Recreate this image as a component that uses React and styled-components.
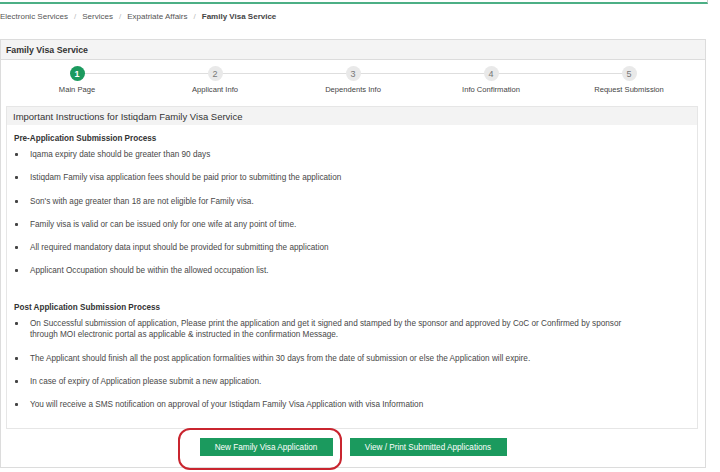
import React from "react";
import styled, { createGlobalStyle } from "styled-components";

const Global = createGlobalStyle`
  html, body { margin: 0; padding: 0; background: #fff; }
  body { font-family: "Liberation Sans", Arial, sans-serif; color: #333; }
  * { box-sizing: border-box; }
`;

const Page = styled.div`
  width: 720px;
  height: 472px;
  position: relative;
  overflow: hidden;
  background: #fff;
`;

const TopBar = styled.div`
  width: 708px;
  height: 4px;
  border-bottom: 2px solid #4caf85;
  border-right: 1px solid #ccc;
`;

const Crumbs = styled.div`
  display: flex;
  align-items: center;
  height: 24px;
  font-size: 8px;
  color: #555;
  gap: 6px;
`;

const Sep = styled.span`
  color: #bbb;
`;

const Current = styled.span`
  font-weight: bold;
  color: #444;
`;

const Panel = styled.div`
  margin-top: 11px;
  width: 706px;
  height: 429px;
  border: 1px solid #dcdcdc;
  background: #fff;
  display: flex;
  flex-direction: column;
`;

const PanelHead = styled.div`
  height: 20px;
  background: #f4f4f4;
  border-bottom: 1px solid #dcdcdc;
  display: flex;
  align-items: center;
  padding-left: 5px;
  font-size: 8.8px;
  font-weight: bold;
  color: #333;
`;

const Stepper = styled.div`
  position: relative;
  display: grid;
  grid-template-columns: repeat(5, 1fr);
  margin: 0 7px;
  padding-top: 6px;
  height: 46px;
`;

const StepLine = styled.div`
  position: absolute;
  left: 10%;
  right: 10%;
  top: 13px;
  height: 1px;
  background: #dedede;
`;

const Step = styled.div`
  display: flex;
  flex-direction: column;
  align-items: center;
  position: relative;
`;

const Dot = styled.div`
  width: 15px;
  height: 15px;
  border-radius: 50%;
  background: ${(p) => (p.$active ? "#1b9a5e" : "#e9e9e9")};
  color: ${(p) => (p.$active ? "#fff" : "#777")};
  font-size: 9px;
  font-weight: ${(p) => (p.$active ? "bold" : "normal")};
  display: flex;
  align-items: center;
  justify-content: center;
`;

const StepLabel = styled.div`
  margin-top: 4px;
  font-size: 7.6px;
  color: #444;
`;

const Box = styled.div`
  margin: 0 7px 0 5px;
  border: 1px solid #e6e6e6;
  height: 323px;
  display: flex;
  flex-direction: column;
`;

const BoxHead = styled.div`
  height: 18px;
  background: #f3f3f3;
  display: flex;
  align-items: center;
  padding-left: 6px;
  font-size: 9.5px;
  color: #333;
`;

const BoxBody = styled.div`
  padding: 6px 60px 0 7px;
`;

const SectionTitle = styled.div`
  font-size: 8.15px;
  font-weight: bold;
  color: #333;
  height: 15px;
  display: flex;
  align-items: center;
  margin-top: ${(p) => p.$top || 0}px;
`;

const List = styled.ul`
  list-style: none;
  margin: 0;
  padding: 0;
`;

const Item = styled.li`
  position: relative;
  padding-left: 16px;
  font-size: 8.2px;
  line-height: 11px;
  color: #484848;
  margin-top: ${(p) => p.$gap}px;
  &::before {
    content: "";
    position: absolute;
    left: 1px;
    top: 4px;
    width: 3px;
    height: 3px;
    background: #444;
    border-radius: 1px;
  }
`;

const Buttons = styled.div`
  display: flex;
  justify-content: center;
  gap: 17px;
  margin-top: 9px;
`;

const Button = styled.button`
  height: 18px;
  width: ${(p) => p.$w}px;
  background: #1b9a5e;
  color: #fff;
  border: none;
  font-family: "Liberation Sans", Arial, sans-serif;
  font-size: 8.2px;
  padding: 0;
  cursor: pointer;
`;

const Highlight = styled.div`
  position: absolute;
  left: 178px;
  top: 428px;
  width: 164px;
  height: 42px;
  border: 2.5px solid #c9252f;
  border-radius: 12px;
  pointer-events: none;
`;

const pre = [
  "Iqama expiry date should be greater than 90 days",
  "Istiqdam Family visa application fees should be paid prior to submitting the application",
  "Son's with age greater than 18 are not eligible for Family visa.",
  "Family visa is valid or can be issued only for one wife at any point of time.",
  "All required mandatory data input should be provided for submitting the application",
  "Applicant Occupation should be within the allowed occupation list.",
];

const post = [
  "On Successful submission of application, Please print the application and get it signed and stamped by the sponsor and approved by CoC or Confirmed by sponsor through MOI electronic portal as applicable & instructed in the confirmation Message.",
  "The Applicant should finish all the post application formalities within 30 days from the date of submission or else the Application will expire.",
  "In case of expiry of Application please submit a new application.",
  "You will receive a SMS notification on approval of your Istiqdam Family Visa Application with visa Information",
];

const steps = ["Main Page", "Applicant Info", "Dependents Info", "Info Confirmation", "Request Submission"];

export default function App() {
  return (
    <Page>
      <Global />
      <TopBar />
      <Crumbs>
        <span>Electronic Services</span>
        <Sep>/</Sep>
        <span>Services</span>
        <Sep>/</Sep>
        <span>Expatriate Affairs</span>
        <Sep>/</Sep>
        <Current>Family Visa Service</Current>
      </Crumbs>
      <Panel>
        <PanelHead>Family Visa Service</PanelHead>
        <Stepper>
          <StepLine />
          {steps.map((s, i) => (
            <Step key={s}>
              <Dot $active={i === 0}>{i + 1}</Dot>
              <StepLabel>{s}</StepLabel>
            </Step>
          ))}
        </Stepper>
        <Box>
          <BoxHead>Important Instructions for Istiqdam Family Visa Service</BoxHead>
          <BoxBody>
            <SectionTitle>Pre-Application Submission Process</SectionTitle>
            <List>
              {pre.map((t, i) => (
                <Item key={i} $gap={i === 0 ? 3 : 12.3}>{t}</Item>
              ))}
            </List>
            <SectionTitle $top={24}>Post Application Submission Process</SectionTitle>
            <List>
              {post.map((t, i) => (
                <Item key={i} $gap={i === 0 ? 3 : 12.3}>{t}</Item>
              ))}
            </List>
          </BoxBody>
        </Box>
        <Buttons>
          <Button $w={133}>New Family Visa Application</Button>
          <Button $w={157}>View / Print Submitted Applications</Button>
        </Buttons>
      </Panel>
      <Highlight />
    </Page>
  );
}
